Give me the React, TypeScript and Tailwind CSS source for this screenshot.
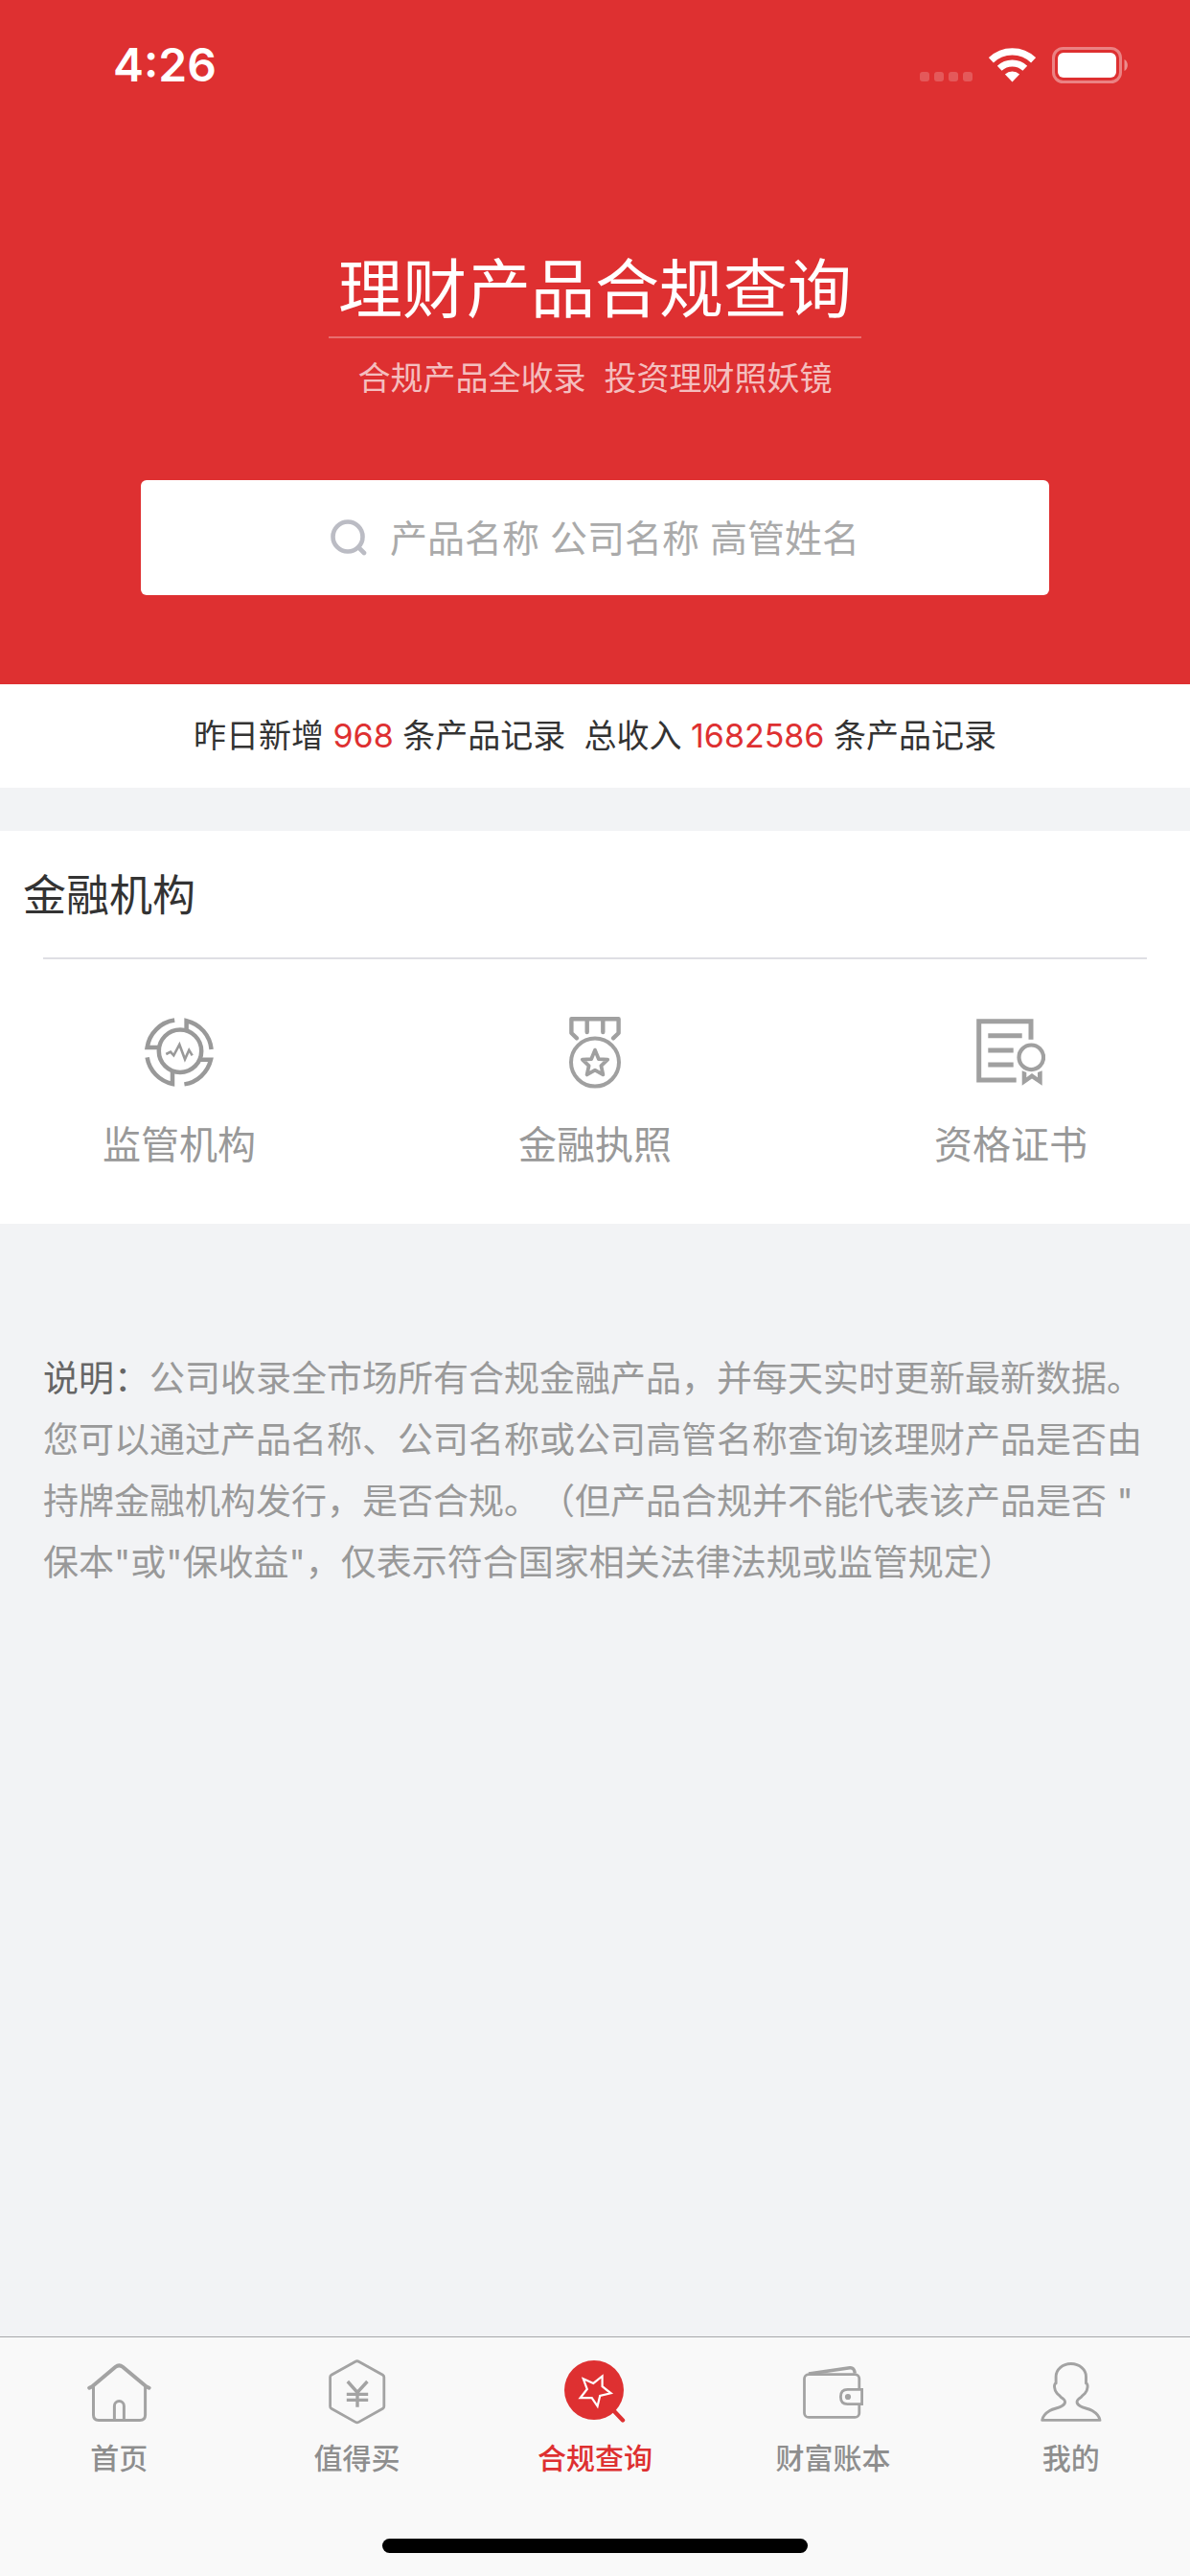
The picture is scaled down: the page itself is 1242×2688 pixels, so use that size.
import React, { useState } from 'react';

interface IconItem {
  label: string;
  icon: React.ReactNode;
}

const SignalDots = () => (
  <div className="flex gap-[5px] pt-6">
    {[...Array(4)].map((_, i) => (
      <span key={i} className="w-[10px] h-[10px] rounded-[3px] bg-white/20" />
    ))}
  </div>
);

const WifiIcon = () => (
  <svg width="49" height="36" viewBox="0 0 49 36" fill="none" stroke="#fff" aria-hidden="true">
    <path d="M2.4 12.8A31.7 31.7 0 0 1 46.6 12.8" strokeWidth="7.2" />
    <path d="M11.2 21.3A19.5 19.5 0 0 1 37.8 21.3" strokeWidth="7" />
    <path d="M24.5 35.5L16.9 27.6A11 11 0 0 1 32.1 27.6Z" fill="#fff" stroke="none" />
  </svg>
);

const BatteryIcon = () => (
  <svg width="80" height="38" viewBox="0 0 80 38" fill="none" aria-hidden="true">
    <rect x="1.5" y="1.5" width="70" height="35" rx="10" stroke="#fff" strokeOpacity="0.4" strokeWidth="3" />
    <rect x="6" y="6" width="61" height="26" rx="6" fill="#fff" />
    <path d="M75.5 13C80 15 80 23 75.5 25Z" fill="#fff" fillOpacity="0.45" />
  </svg>
);

const SearchIcon = () => (
  <svg width="38" height="38" viewBox="0 0 38 38" fill="none" stroke="#bbbcc4" strokeWidth="4.6" strokeLinecap="round" aria-hidden="true">
    <circle cx="18" cy="18" r="15.5" />
    <path d="M29.5 29.5L35 35" />
  </svg>
);

const RegulatorIcon = () => (
  <svg width="72" height="72" viewBox="0 0 72 72" fill="none" stroke="#999" strokeWidth="4.5" aria-hidden="true">
    <path d="M31.2 2.6A33.7 33.7 0 0 0 2.6 31H14" />
    <path d="M43.6 13V3.2A33.7 33.7 0 0 1 69.6 33" />
    <path d="M41.4 69.4A33.7 33.7 0 0 0 69 43.8H58" />
    <path d="M2.6 41.4A33.7 33.7 0 0 0 29 69V57" />
    <circle cx="37" cy="34.7" r="22.2" />
    <path d="M22.3 38L27 35.7L30.3 39.3L36.3 28L42 43.3L46.3 33.7L49.7 39.3" strokeWidth="2.6" />
  </svg>
);

const MedalIcon = () => (
  <svg width="54" height="75" viewBox="0 0 54 75" fill="none" stroke="#a0a0a0" strokeWidth="4.4" strokeLinecap="round" strokeLinejoin="round" aria-hidden="true">
    <path d="M8 22.3L2.4 17V2.2H51.6V17L46 22.3" />
    <path d="M18.7 3V16M35.3 3V16" />
    <circle cx="27" cy="47.6" r="25" strokeWidth="4" />
    <path d="M27 34.6L30.9 44.2L40.2 44.6L33.4 51.2L35.4 60.4L27 55.6L18.6 60.4L20.6 51.2L13.8 44.6L23.1 44.2Z" strokeWidth="3.8" />
  </svg>
);

const CertificateIcon = () => (
  <svg width="72" height="70" viewBox="0 0 72 70" fill="none" stroke="#a0a0a0" strokeWidth="5" aria-hidden="true">
    <path d="M57 21.7V2.7H2.7V64H41.7" />
    <path d="M12.3 17.8H47.7M12.3 33H38.7M12.3 47.9H38.7" />
    <circle cx="57.3" cy="40.3" r="12.8" strokeWidth="4.2" />
    <path d="M47.7 54.3V69.7L58 62.5L68.7 69.7V54.3L64 56V61.2L58 57L52.3 61.2V56Z" fill="#a0a0a0" stroke="none" />
  </svg>
);

const HomeIcon = () => (
  <svg width="67" height="61" viewBox="0 0 67 61" fill="none" stroke="#a3a3a3" strokeWidth="3" strokeLinecap="round" strokeLinejoin="round" aria-hidden="true">
    <path d="M2.2 25.7L5.2 24.2L29.6 3.8Q33.3 0.9 37 3.8L61.6 24.2L64.6 25.7" strokeWidth="4" />
    <path d="M6.5 24V54Q6.5 59.4 12 59.4H55Q60.6 59.4 60.6 54V24" />
    <path d="M28.4 59V44.5A5 5 0 0 1 38.4 44.5V59" />
  </svg>
);

const YuanIcon = () => (
  <svg width="60" height="68" viewBox="0 0 60 68" fill="none" stroke="#a3a3a3" strokeWidth="2.8" strokeLinejoin="round" aria-hidden="true">
    <path d="M28 2.3Q29.7 1.2 31.4 2.3L56.6 16.3Q57.8 17 57.8 18.5V49Q57.8 50.5 56.6 51.2L31.4 65.4Q29.7 66.4 28 65.4L2.8 51.2Q1.6 50.5 1.6 49V18.5Q1.6 17 2.8 16.3Z" />
    <path d="M19.8 23L30 34.5L40.4 23M30 34V49.7M18.8 36.4H41.2M18.8 42.4H41.2" strokeWidth="3.4" strokeLinejoin="miter" />
  </svg>
);

const ComplianceIcon = () => (
  <svg width="64" height="66" viewBox="0 0 64 66" fill="none" aria-hidden="true">
    <circle cx="31" cy="31" r="31" fill="#de3031" />
    <path d="M52 53L61 62.5" stroke="#de3031" strokeWidth="4.4" strokeLinecap="round" />
    <path d="M19.8 19.3L30.3 23.9L39.6 16.5V27.2L48.6 34.3L37.2 37L34.6 47.8L28.7 39.2H16.6L23.8 30Z" stroke="#fff" strokeWidth="2.2" />
  </svg>
);

const WalletIcon = () => (
  <svg width="63" height="55" viewBox="0 0 63 55" fill="none" stroke="#a3a3a3" strokeWidth="2.8" strokeLinejoin="round" aria-hidden="true">
    <path d="M6 8L49 1.8Q53.5 1.2 54.3 7.5" strokeWidth="3.4" />
    <rect x="1.5" y="8.6" width="57.3" height="44.8" rx="4.5" />
    <path d="M61.6 24.4H46.5Q39.4 24.4 39.4 32Q39.4 39.6 46.5 39.6H61.6Z" fill="#f9f9f9" strokeLinejoin="miter" />
    <circle cx="47" cy="32" r="3.1" fill="#a3a3a3" stroke="none" />
  </svg>
);

const ProfileIcon = () => (
  <svg width="64" height="62" viewBox="0 0 64 62" fill="none" stroke="#a3a3a3" strokeWidth="2.9" strokeLinejoin="round" aria-hidden="true">
    <path d="M31.8 1.5C41 1.5 47.5 8 47.5 15V22C50 22 49.5 29 46.5 32.3C45 34 44 34 42.5 36.2C37 39.5 36.5 43 41.5 45.8C45 48 50 48 54 50.5C59 53.5 61.5 57 62 60.4H1.7C2.2 57 4.6 53.5 9.6 50.5C13.6 48 18.6 48 22.1 45.8C27.1 43 26.6 39.5 21.1 36.2C19.6 34 18.6 34 17.1 32.3C14.1 29 13.6 22 16.1 22V15C16.1 8 22.6 1.5 31.8 1.5Z" />
  </svg>
);

const institutions: IconItem[] = [
  { label: '监管机构', icon: <RegulatorIcon /> },
  { label: '金融执照', icon: <MedalIcon /> },
  { label: '资格证书', icon: <CertificateIcon /> },
];

const tabs: IconItem[] = [
  { label: '首页', icon: <HomeIcon /> },
  { label: '值得买', icon: <YuanIcon /> },
  { label: '合规查询', icon: <ComplianceIcon /> },
  { label: '财富账本', icon: <WalletIcon /> },
  { label: '我的', icon: <ProfileIcon /> },
];

const App: React.FC = () => {
  const [keyword, setKeyword] = useState('');
  const [activeTab, setActiveTab] = useState('合规查询');

  return (
    <div className="flex flex-col min-h-screen bg-[#f2f3f5] text-[#333] font-['Inter','Noto_Sans_CJK_SC',sans-serif]">

      {/* HEADER */}
      <header className="flex flex-col items-center bg-[#de3031] text-white pb-[93px]">
        <div className="flex items-center justify-between w-full h-[132px] pt-1 pl-[118px] pr-16">
          <span className="text-[48px] leading-none font-semibold">4:26</span>
          <div className="flex items-center gap-[17px]">
            <SignalDots />
            <WifiIcon />
            <BatteryIcon />
          </div>
        </div>
        <h1 className="mt-[122px] px-[10px] pb-px border-b-2 border-white/30 text-[67px] leading-[96px] font-normal">理财产品合规查询</h1>
        <p className="mt-[17px] text-[34px] leading-[50px] text-white/70 whitespace-pre">合规产品全收录  投资理财照妖镜</p>
        <label className="flex items-center justify-center gap-6 w-[948px] max-w-full h-[120px] mt-[81px] rounded-md bg-white">
          <SearchIcon />
          <input
            type="text"
            value={keyword}
            onChange={(e) => setKeyword(e.target.value)}
            placeholder="产品名称 公司名称 高管姓名"
            aria-label="搜索"
            className="field-sizing-content text-[39px] leading-[60px] text-[#333] placeholder:text-[#aaa] outline-none"
          />
        </label>
      </header>

      {/* STATS */}
      <p className="bg-white py-[29px] text-center text-[34px] leading-[50px] whitespace-pre">
        昨日新增 <span className="text-[#de3031]">968</span> 条产品记录  总收入 <span className="text-[#de3031]">1682586</span> 条产品记录
      </p>

      {/* INSTITUTIONS */}
      <section className="mt-[45px] bg-white pb-[52px]">
        <h2 className="px-6 pt-9 pb-8 text-[45px] leading-[64px] font-normal">金融机构</h2>
        <div className="mx-[45px] border-t-2 border-[#dfdfe4]" />
        <div className="flex justify-between px-[107px] pt-[59px]">
          {institutions.map((item) => (
            <a key={item.label} href="#" className="flex flex-col items-center gap-[29px] text-[40px] leading-[60px] text-[#999]">
              <span className="flex items-center h-[76px]">{item.icon}</span>
              {item.label}
            </a>
          ))}
        </div>
      </section>

      {/* NOTE */}
      <p className="px-[45px] pt-[130px] text-[37px] leading-[64px] text-[#999] [text-spacing-trim:space-all]">
        <span className="text-[#666]">说明：</span>公司收录全市场所有合规金融产品，并每天实时更新最新数据。
        <br />
        您可以通过产品名称、公司名称或公司高管名称查询该理财产品是否由
        <br />
        持牌金融机构发行，是否合规。（但产品合规并不能代表该产品是否 "
        <br />
        保本"或"保收益"，仅表示符合国家相关法律法规或监管规定）
      </p>

      {/* TAB BAR */}
      <nav className="flex flex-col items-center mt-auto bg-[#f9f9f9] border-t border-[#a7a8aa] pt-[21px] pb-6">
        <div className="grid grid-cols-5 w-full">
          {tabs.map((tab) => (
            <button
              key={tab.label}
              onClick={() => setActiveTab(tab.label)}
              className={`flex flex-col items-center gap-[11px] text-[30px] leading-[44px] font-medium ${activeTab === tab.label ? 'text-[#de3031]' : 'text-[#8e8e8e]'}`}
            >
              <span className="flex items-center h-[72px]">{tab.icon}</span>
              {tab.label}
            </button>
          ))}
        </div>
        <div className="w-[444px] h-[15px] mt-[62px] rounded-full bg-black" />
      </nav>
    </div>
  );
};

export default App;
